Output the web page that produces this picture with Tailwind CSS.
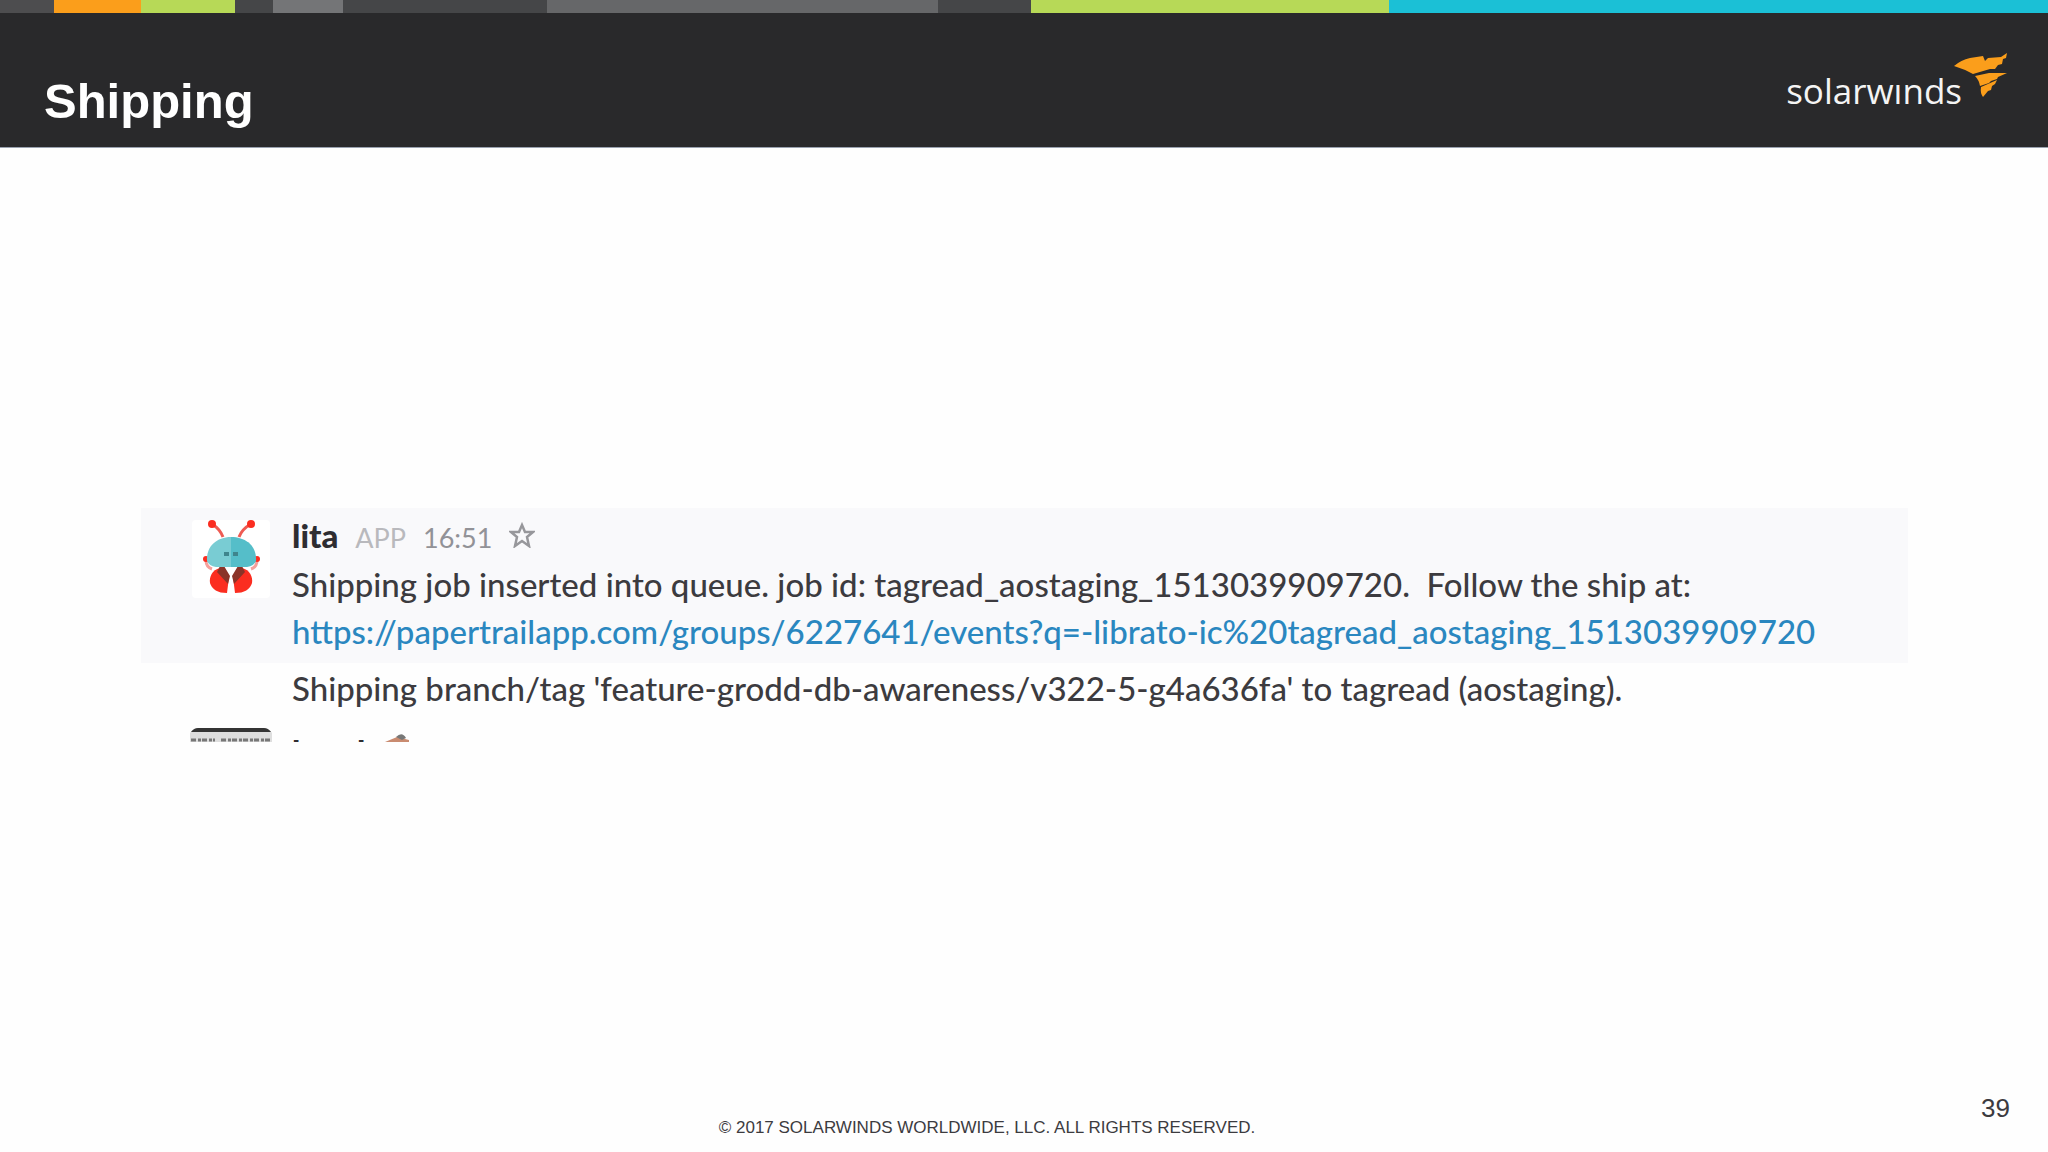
<!DOCTYPE html>
<html lang="en">

<head>
    <meta charset="UTF-8" />
    <meta name="viewport" content="width=device-width, initial-scale=1">
    <title>Shipping</title>
    <script src="https://cdn.jsdelivr.net/npm/@tailwindcss/browser@4"></script>
</head>

<body class="min-h-screen flex flex-col bg-[#fefefe] font-['Liberation_Sans',Arial,sans-serif] text-[#3c3b3f]">
    <!-- Header -->
    <header class="bg-[#29292b] border-b border-gray-400">
        <div class="grid grid-cols-[54fr_87fr_94fr_38fr_70fr_204fr_391fr_93fr_358fr_659fr] h-[13px]" aria-hidden="true">
            <div class="bg-[#4d4d4f]"></div>
            <div class="bg-[#fb9e1b]"></div>
            <div class="bg-[#b7d957]"></div>
            <div class="bg-[#454648]"></div>
            <div class="bg-[#747577]"></div>
            <div class="bg-[#454648]"></div>
            <div class="bg-[#666769]"></div>
            <div class="bg-[#454648]"></div>
            <div class="bg-[#b7d957]"></div>
            <div class="bg-[#1bc0d6]"></div>
        </div>
        <div class="flex justify-between items-start pl-11 pr-10 pb-3.5">
            <h1 class="pt-14 text-[49px]/16 font-bold text-white">Shipping</h1>
            <div class="flex items-start pt-10">
                <span class="pt-5 text-[35px]/9 font-medium font-['Open_Sans',sans-serif] text-[#f4f4f4]">solarwınds</span>
                <svg class="-ml-2 w-[54px] h-11" viewBox="0 0 54 44" fill="#fb9e1b" aria-hidden="true">
                    <path d="M0 13Q7 7 16 5L29 3L31 8L34 5L47 4L50 2L53 0L52 5L49 6L48 11L44 12L41 16L36 16L19 21Q10 16 0 13Z" />
                    <path d="M21 23L35 20L53 20L44 24L43 26L37 28L35 30L26 33Q25 27 21 23Z" />
                    <path d="M27 34L43 27L41 31L38 33L37 37L34 38L29 44Q26 40 27 34Z" />
                </svg>
            </div>
        </div>
    </header>

    <!-- Chat log -->
    <main class="grow pt-[360px] pl-[141px] pr-[140px] font-[Lato,sans-serif] font-medium text-[33px]/[47px]">
        <article class="flex gap-[22px] pl-[51px] pt-1 pb-2 bg-[#f9f9fb]">
            <div class="mt-2 size-[78px] shrink-0 rounded bg-white">
                <svg viewBox="0 0 78 78" role="img" aria-label="lita">
                    <g fill="none" stroke="#ee5b53" stroke-width="3">
                        <path d="M31 17Q28 9 20 4" />
                        <path d="M47 17Q50 9 59 4" />
                        <path d="M14 40Q14 47 20 49M65 40Q65 47 59 49" stroke="#f5a09c" />
                    </g>
                    <g fill="#fb2d20">
                        <circle cx="20" cy="4" r="4" />
                        <circle cx="59" cy="4" r="4" />
                        <circle cx="14" cy="39" r="3" />
                        <circle cx="65" cy="39" r="3" />
                        <path d="M28 48C20 50 17 57 18 63Q21 73 35 73L37 57Z" />
                        <path d="M50 48C58 50 61 57 60 63Q57 73 43 73L41 57Z" />
                    </g>
                    <path d="M28 46L25 52L36 64L38 56L32 46ZM50 46L53 52L42 64L40 56L46 46Z" fill="#8a3328" />
                    <path d="M15 41C14 26 25 17 39 17V47H24Q17 46 15 41Z" fill="#79ccd3" />
                    <path d="M64 41C65 26 54 17 39 17V47H55Q62 46 64 41Z" fill="#55bec9" />
                    <path d="M32 32h5v4h-5zM41 32h5v4h-5z" fill="#3f858d" />
                </svg>
            </div>
            <div>
                <div class="flex items-baseline gap-[17px]">
                    <span class="font-black text-[#2e2d31]">lita</span>
                    <span class="text-[27px] font-normal text-[#b9b9bd]">APP</span>
                    <time class="text-[27px] font-normal text-[#929297]">16:51</time>
                    <button type="button" aria-label="Star message">
                        <svg class="size-[26px]" viewBox="0 0 26 26" fill="none" stroke="#97979b" stroke-width="2.500">
                            <path d="M13 3L16 10H24L18 15L20 24L13 19L6 24L8 15L2 10H10Z" />
                        </svg>
                    </button>
                </div>
                <p class="whitespace-pre-wrap">Shipping job inserted into queue. job id: tagread_aostaging_1513039909720.  Follow the ship at:</p>
                <a href="https://papertrailapp.com/groups/6227641/events?q=-librato-ic%20tagread_aostaging_1513039909720" class="block text-[#2a87c0]">https://papertrailapp.com/groups/6227641/events?q=-librato-ic%20tagread_aostaging_1513039909720</a>
            </div>
        </article>
        <p class="pl-[151px] pt-0.5">Shipping branch/tag 'feature-grodd-db-awareness/v322-5-g4a636fa' to tagread (aostaging).</p>

        <!-- Next message, cut off by the edge of the log -->
        <div class="flex gap-5 h-3.5 mt-4 pl-[49px] overflow-hidden">
            <svg class="w-[82px] h-4 shrink-0" viewBox="0 0 82 16" aria-hidden="true">
                <path d="M0 5Q3 0 8 0H74Q79 0 82 5V16H0Z" fill="#dedede" />
                <path d="M1 4Q4 0 8 0H74Q78 0 81 4Z" fill="#343434" />
                <path d="M1 12h24M31 12h50" stroke="#777" stroke-width="3" stroke-dasharray="5 2 3 1" />
            </svg>
            <span class="font-black text-[#2e2d31]">band</span>
            <svg class="w-6 h-4" viewBox="0 0 24 16" aria-hidden="true">
                <path d="M0 14L12 9L24 12V14Z" fill="#c98b70" />
                <path d="M11 9Q17 3 21 10L17 12Z" fill="#777" />
            </svg>
        </div>
    </main>

    <!-- Footer -->
    <footer class="grid grid-cols-[1fr_auto_1fr] items-start pl-5 pr-[38px] pb-2.5">
        <p class="col-start-2 pt-6 mr-14 text-[17px]/7">© 2017 SOLARWINDS WORLDWIDE, LLC. ALL RIGHTS RESERVED.</p>
        <span class="justify-self-end text-[26px]/9">39</span>
    </footer>
</body>

</html>
